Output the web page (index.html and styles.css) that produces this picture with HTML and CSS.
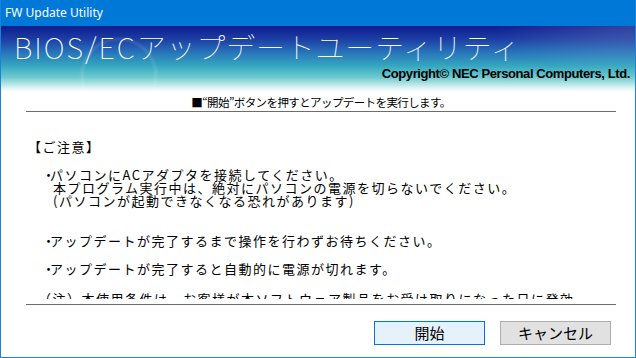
FILE: index.html
```html
<!DOCTYPE html>
<html lang="ja">
<head>
    <meta charset="UTF-8">
    <title>FW Update Utility</title>
    <link rel="stylesheet" href="styles.css">
</head>
<body>
    <div class="window">
        <div class="titlebar">FW Update Utility</div>
        <div class="banner">
            <h1 class="banner-title"><span class="latin">BIOS/EC</span>アップデートユーティリティ</h1>
            <p class="copyright">Copyright© NEC Personal Computers, Ltd.</p>
        </div>
        <p class="lead">■“開始”ボタンを押すとアップデートを実行します。</p>
        <div class="notes">
            <div class="notes-inner">
                <p class="heading">【ご注意】</p>
                <p class="item"><span class="mark">・</span>パソコンにACアダプタを接続してください。<br>本プログラム実行中は、絶対にパソコンの電源を切らないでください。<br>(パソコンが起動できなくなる恐れがあります)</p>
                <p class="item wide"><span class="mark">・</span>アップデートが完了するまで操作を行わずお待ちください。</p>
                <p class="item"><span class="mark">・</span>アップデートが完了すると自動的に電源が切れます。</p>
                <p class="extra">（注）本使用条件は、お客様が本ソフトウェア製品をお受け取りになった日に発効</p>
            </div>
        </div>
        <div class="actions">
            <button class="btn primary">開始</button>
            <button class="btn">キャンセル</button>
        </div>
    </div>
</body>
</html>
```

FILE: styles.css
```css
* {
    box-sizing: border-box;
}
body {
    margin: 0;
    font-family: "Noto Sans CJK JP", sans-serif;
    background-color: #fff;
    color: #000;
}
.window {
    width: 636px;
    height: 358px;
    border: 1px solid #1883d7;
    border-top: none;
    display: flex;
    flex-direction: column;
    overflow: hidden;
}
.titlebar {
    height: 26px;
    margin: 0 -1px;
    padding-left: 5px;
    background-color: #0078d7;
    color: #fff;
    font-family: "Noto Sans", "Open Sans", sans-serif;
    font-size: 12px;
    line-height: 26px;
}

/* banner with the big title */
.banner {
    height: 66px;
    padding: 0 5px 0 13px;
    display: flex;
    flex-direction: column;
    background:
        radial-gradient(ellipse 40px 40px at 118px 50px, rgba(255,255,255,0) 85%, rgba(255,255,255,0.1) 92%, rgba(255,255,255,0) 100%),
        radial-gradient(ellipse 200px 70px at 100% 0%, rgba(255,255,255,0.16), rgba(255,255,255,0) 70%),
        linear-gradient(to bottom, #0e1c8f 0%, #1c3ea4 20%, #2874ba 40%, #34a6bf 60%, #6fcbd0 78%, #e6f6f6 95%, #fff 100%);
}
.banner-title {
    margin: 2px 0 0;
    font-size: 29px;
    font-weight: 100;
    line-height: 36px;
    color: #fff;
    white-space: nowrap;
    letter-spacing: 0.8px;
}
.banner-title .latin {
    letter-spacing: 2px;
}
.copyright {
    margin: 2px 0 0;
    align-self: flex-end;
    font-family: "Liberation Sans Narrow", "Liberation Sans", sans-serif;
    font-weight: bold;
    font-size: 13px;
    letter-spacing: -0.4px;
    line-height: 16px;
}

.lead {
    margin: 0 19px 0 25px;
    height: 20px;
    line-height: 20px;
    font-size: 11.5px;
    letter-spacing: -0.6px;
    text-align: center;
    border-bottom: 1px solid #6d6d6d;
}

/* notes box */
.notes {
    margin: 0 19px 0 25px;
    height: 193px;
    padding-bottom: 5px;
    border-bottom: 1px solid #6d6d6d;
}
.notes-inner {
    height: 100%;
    overflow: hidden;
    padding-top: 28px;
    font-size: 13px;
    letter-spacing: 1.5px;
    line-height: 13px;
}
.notes-inner p {
    margin: 0;
    white-space: nowrap;
}
.heading {
    padding-left: 2px;
}
.item {
    padding-left: 27px;
    text-indent: -11px;
    margin-top: 15px !important;
}
.item.wide {
    margin-top: 27px !important;
}
.mark {
    letter-spacing: -5px;
}
.extra {
    padding-left: 12px;
    margin-top: 17px !important;
}

.actions {
    display: flex;
    justify-content: flex-end;
    gap: 15px;
    padding: 16px 24px 0 0;
}
.btn {
    width: 111px;
    height: 24px;
    padding: 0;
    font-family: "Noto Sans CJK JP", sans-serif;
    font-size: 15px;
    line-height: 22px;
    background-color: #e1e1e1;
    border: 1px solid #adadad;
    color: #000;
}
.btn.primary {
    background-color: #e5f1fb;
    border-color: #0078d7;
}
```
